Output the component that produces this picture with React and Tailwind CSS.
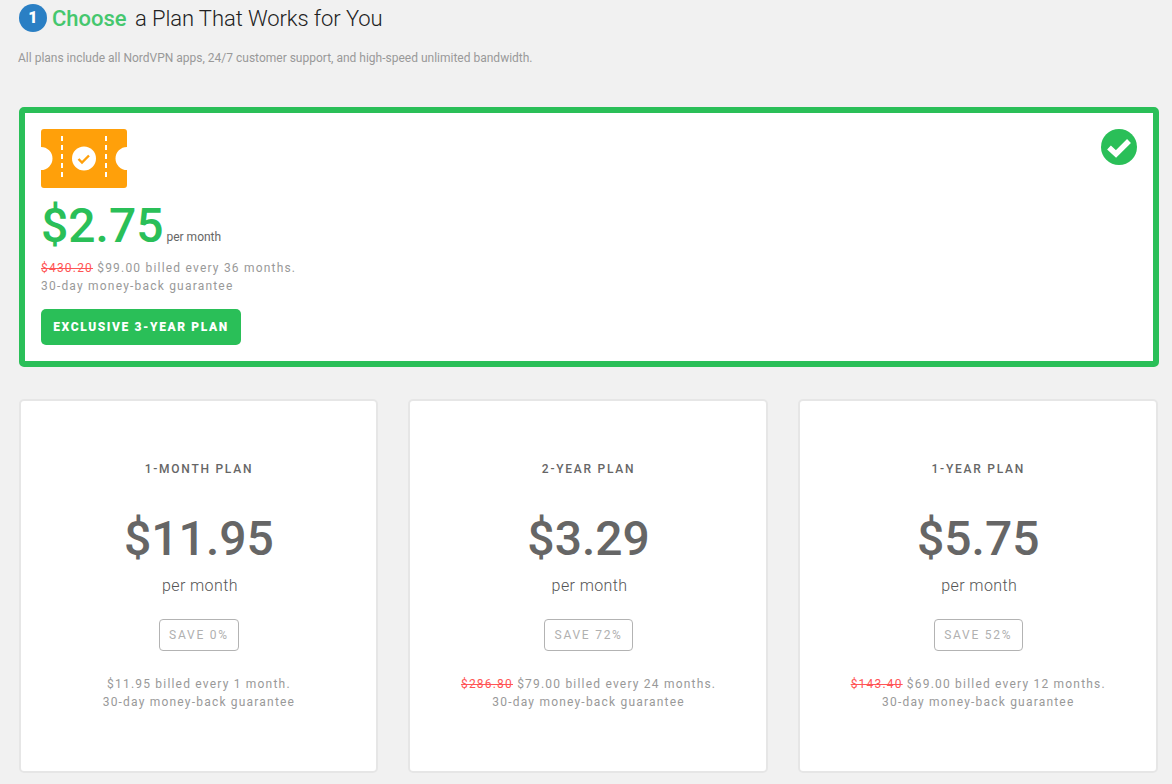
const plans = [
  { name: "1-MONTH PLAN", price: "$11.95", save: "SAVE 0%", billed: "$11.95 billed every 1 month." },
  { name: "2-YEAR PLAN", price: "$3.29", save: "SAVE 72%", old: "$286.80", billed: "$79.00 billed every 24 months." },
  { name: "1-YEAR PLAN", price: "$5.75", save: "SAVE 52%", old: "$143.40", billed: "$69.00 billed every 12 months." },
];

function Ticket() {
  return (
    <svg width="86" height="59" viewBox="0 0 86 59" className="block">
      <path
        d="M3 0H83a3 3 0 0 1 3 3V18a11.5 11.5 0 0 0 0 23V56a3 3 0 0 1-3 3H3a3 3 0 0 1-3-3V41a11.5 11.5 0 0 0 0-23V3a3 3 0 0 1 3-3Z"
        fill="#ffa00a"
      />
      <line x1="21" y1="7" x2="21" y2="52" stroke="#fff" strokeWidth="2" strokeDasharray="5 4" />
      <line x1="65" y1="7" x2="65" y2="52" stroke="#fff" strokeWidth="2" strokeDasharray="5 4" />
      <circle cx="43" cy="29.5" r="12" fill="#fff" />
      <path d="M37.5 30l3.5 3.5 7-7" fill="none" stroke="#ffa00a" strokeWidth="2.4" />
    </svg>
  );
}

function PlanCard({ plan }) {
  return (
    <div className="flex h-[374px] flex-col items-center rounded-[5px] border-2 border-[#e6e6e6] bg-white pt-[61px] pl-[1px]">
      <div className="text-[12px] leading-[14px] font-medium tracking-[1.75px] text-[#666]">{plan.name}</div>
      <div className="mt-[35px] text-[48px] leading-[56px] font-medium text-[#666]">{plan.price}</div>
      <div className="mt-[7px] ml-[2px] text-[16px] leading-[24px] font-light tracking-[0.4px] text-[#555]">per month</div>
      <div className="mt-[21px] flex h-[32px] items-center rounded-[4px] border border-[#b3b3b3] px-[9.5px] text-[12px] tracking-[1.75px] text-[#b0b0b0]">
        {plan.save}
      </div>
      <div className="mt-[24px] text-center text-[12px] leading-[18px] tracking-[1.2px] text-[#999]">
        <div>
          {plan.old && <span className="text-[#f55] line-through">{plan.old}</span>}
          {plan.old && " "}
          {plan.billed}
        </div>
        <div>30-day money-back guarantee</div>
      </div>
    </div>
  );
}

export default function App() {
  return (
    <div className="h-[784px] overflow-hidden bg-[#f1f1f1] font-['Roboto',sans-serif]">
      <div className="flex h-[36px] items-center pl-[19px]">
        <div className="flex size-[28px] items-center justify-center rounded-full bg-[#2a7fc4] text-[16px] font-black text-white">1</div>
        <h1 className="ml-[5px] text-[22px] font-light tracking-[-0.08px] text-[#222]">
          <span className="mr-[3px] font-medium tracking-normal text-[#45c76e]">Choose</span> a Plan That Works for You
        </h1>
      </div>
      <p className="mt-[14px] pl-[18px] text-[12px] leading-[16px] text-[#999]">
        All plans include all NordVPN apps, 24/7 customer support, and high-speed unlimited bandwidth.
      </p>

      <div className="mx-[19px] mt-[41px] flex h-[260px] w-[1140px] justify-between rounded-[5px] border-[6px] border-[#2abf58] bg-white px-[16px] pt-[16px]">
        <div>
          <Ticket />
          <div className="mt-[10px] flex items-end">
            <span className="text-[48px] leading-[56px] font-medium text-[#2abf58]">$2.75</span>
            <span className="mb-[10px] ml-[3px] text-[12px] leading-[14px] text-[#666]">per month</span>
          </div>
          <div className="mt-[5px] text-[12px] leading-[18px] tracking-[1.2px] text-[#999]">
            <div>
              <span className="text-[#f55] line-through">$430.20</span> $99.00 billed every 36 months.
            </div>
            <div>30-day money-back guarantee</div>
          </div>
          <div className="mt-[14px] flex h-[36px] w-[200px] items-center justify-center rounded-[5px] bg-[#2abf58] text-[12px] font-black tracking-[1.6px] text-white">
            EXCLUSIVE 3-YEAR PLAN
          </div>
        </div>
        <svg width="36" height="36" viewBox="0 0 36 36">
          <circle cx="18" cy="18" r="18" fill="#2abf58" />
          <path d="M8 18.5l7 6.5L28 12" fill="none" stroke="#fff" strokeWidth="5.5" />
        </svg>
      </div>

      <div className="mt-[32px] ml-[18.6px] grid w-[1139px] grid-cols-3 gap-[30px]">
        {plans.map((plan) => (
          <PlanCard key={plan.name} plan={plan} />
        ))}
      </div>
    </div>
  );
}
